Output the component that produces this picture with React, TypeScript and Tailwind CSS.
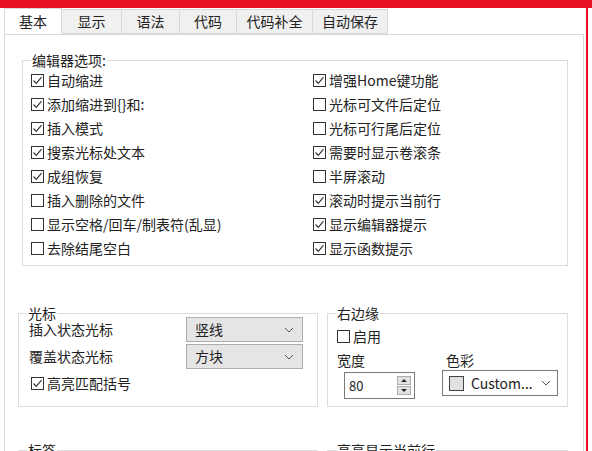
import React from "react";

const F = { fontFamily: '"Noto Sans CJK SC", "Noto Sans", sans-serif' };

function Cb({ checked, label }: { checked?: boolean; label: string }) {
  return (
    <div className="flex items-center h-[24px] text-[14px] text-[#222]">
      <div className="w-[13px] h-[13px] border border-[#333] bg-white mr-[3px] flex items-center justify-center">
        {checked && (
          <svg width="11" height="11" viewBox="0 0 11 11">
            <path d="M1.5 5.5 L4.3 8.3 L9.5 2.2" fill="none" stroke="#333" strokeWidth="1.2" />
          </svg>
        )}
      </div>
      <span>{label}</span>
    </div>
  );
}

function Group({ title, className, children }: { title: string; className: string; children?: React.ReactNode }) {
  return (
    <div className={"relative shrink-0 border border-[#dcdcdc] " + className}>
      <span className="absolute left-[8px] top-[-11px] bg-white text-[14px] leading-[20px] text-[#222] px-[1px]">{title}</span>
      {children}
    </div>
  );
}

function Chevron() {
  return (
    <svg width="10" height="6" viewBox="0 0 10 6">
      <path d="M1 1 L5 5 L9 1" fill="none" stroke="#555" strokeWidth="1" />
    </svg>
  );
}

function Select({ text }: { text: string }) {
  return (
    <div className="w-[117px] h-[25px] bg-[#e5e5e5] border border-[#adadad] flex items-center justify-between px-[8px] text-[14px] text-[#222]">
      <span>{text}</span>
      <Chevron />
    </div>
  );
}

export default function App() {
  const tabs = ["基本", "显示", "语法", "代码", "代码补全", "自动保存"];
  const widths = [58, 60, 58, 57, 76, 75];
  const left: [boolean, string][] = [
    [true, "自动缩进"], [true, "添加缩进到{}和:"], [true, "插入模式"], [true, "搜索光标处文本"],
    [true, "成组恢复"], [false, "插入删除的文件"], [false, "显示空格/回车/制表符(乱显)"], [false, "去除结尾空白"],
  ];
  const right: [boolean, string][] = [
    [true, "增强Home键功能"], [false, "光标可文件后定位"], [false, "光标可行尾后定位"], [true, "需要时显示卷滚条"],
    [false, "半屏滚动"], [true, "滚动时提示当前行"], [true, "显示编辑器提示"], [true, "显示函数提示"],
  ];
  return (
    <div style={F} className="w-[592px] h-[451px] bg-white overflow-hidden flex flex-col">
      <div className="h-[8px] shrink-0 bg-[#e81123]" />
      <div className="flex flex-1 min-h-0">
        <div className="flex-1 flex flex-col pl-[4px] pt-[1px]">
          <div className="flex h-[25px] shrink-0">
            {tabs.map((t, i) => (
              <div
                key={t}
                style={{ width: widths[i] }}
                className={
                  "flex items-center justify-center text-[14px] text-[#222] border border-[#d9d9d9] " +
                  (i === 0 ? "bg-white border-b-white h-[26px] -mt-[1px] z-10" : "bg-[#f0f0f0] border-l-0")
                }
              >
                {t}
              </div>
            ))}
          </div>
          <div className="flex-1 w-[580px] border border-[#d9d9d9] border-b-0 flex flex-col pl-[13px] pt-[25px]">
            <Group title="编辑器选项:" className="ml-[4px] w-[546px] h-[206px]">
              <div className="grid grid-cols-2 pl-[8px] pt-[7px]">
                <div>{left.map(([c, l]) => <Cb key={l} checked={c} label={l} />)}</div>
                <div className="pl-[14px]">{right.map(([c, l]) => <Cb key={l} checked={c} label={l} />)}</div>
              </div>
            </Group>
            <div className="flex gap-[9px] mt-[47px]">
              <Group title="光标" className="w-[300px] h-[94px] pl-[10px] pt-[3px]">
                <div className="grid grid-cols-[157px_117px] gap-y-[2px] items-center text-[14px] text-[#222]">
                  <span>插入状态光标</span>
                  <Select text="竖线" />
                  <span>覆盖状态光标</span>
                  <Select text="方块" />
                </div>
                <div className="ml-[2px] mt-[2px]"><Cb checked label="高亮匹配括号" /></div>
              </Group>
              <Group title="右边缘" className="w-[241px] h-[94px] pl-[9px] pt-[10px]">
                <Cb label="启用" />
                <div className="flex gap-[27px] mt-[2px]">
                  <div className="flex flex-col">
                    <span className="text-[14px] text-[#222] leading-[20px]">宽度</span>
                    <div className="relative ml-[7px] mt-[2px] w-[71px] h-[27px] border border-[#7a7a7a] flex items-center pl-[4px] text-[13px] text-[#222]">
                      80
                      <div className="absolute right-[3px] top-[3px] w-[14px] h-[19px] flex flex-col gap-[1px]">
                        {["M2 6 L7 1 L12 6 Z", "M2 1 L7 6 L12 1 Z"].map((d) => (
                          <div key={d} className="flex-1 bg-[#e1e1e1] border border-[#adadad] flex items-center justify-center">
                            <svg width="8" height="5" viewBox="0 0 14 7"><path d={d} fill="#222" /></svg>
                          </div>
                        ))}
                      </div>
                    </div>
                  </div>
                  <div className="flex flex-col">
                    <span className="text-[14px] text-[#222] leading-[20px] ml-[4px]">色彩</span>
                    <div className="w-[116px] h-[26px] border border-[#7a7a7a] flex items-center px-[6px] text-[14px] text-[#222]">
                      <div className="w-[15px] h-[15px] border border-[#444] bg-[#e0e0e0] mr-[7px]" />
                      <span className="flex-1">Custom...</span>
                      <Chevron />
                    </div>
                  </div>
                </div>
              </Group>
            </div>
            <div className="flex gap-[9px] mt-[43px]">
              <Group title="标签" className="w-[300px] h-[40px]" />
              <Group title="高亮显示当前行" className="w-[241px] h-[40px]" />
            </div>
          </div>
        </div>
        <div className="w-[2px] bg-[#e81123]" />
        <div className="w-[4px]" />
      </div>
    </div>
  );
}
